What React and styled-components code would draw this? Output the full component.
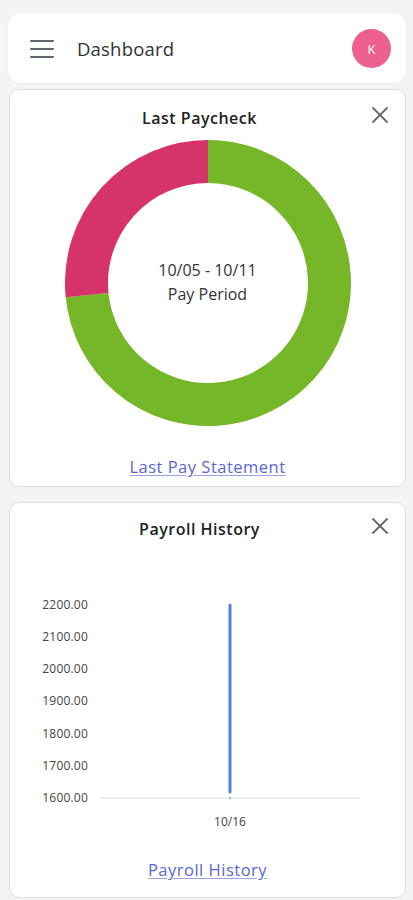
import React from "react";
import styled, { createGlobalStyle } from "styled-components";

const Global = createGlobalStyle`
  html, body { margin: 0; padding: 0; background: #f3f4f5; }
  body { font-family: "Open Sans", "Noto Sans", Arial, sans-serif; color: #2b2b2b; }
  * { box-sizing: border-box; }
`;

const Page = styled.div`
  display: flex;
  flex-direction: column;
  padding: 14px 7px 2px 8px;
  width: 413px;
`;

const TopBar = styled.header`
  display: flex;
  align-items: center;
  height: 69px;
  background: #fff;
  border-radius: 12px;
  padding: 0 15px 0 22px;
  box-shadow: 0 1px 2px rgba(0, 0, 0, 0.05);
`;

const MenuButton = styled.div`
  width: 24px;
  height: 18px;
  display: flex;
  flex-direction: column;
  justify-content: space-between;
  span {
    display: block;
    height: 2px;
    background: #5f6870;
    border-radius: 1px;
  }
`;

const Title = styled.h1`
  flex: 1;
  margin: 0 0 0 23px;
  font-size: 18.5px;
  font-weight: 400;
  color: #333;
  letter-spacing: 0.2px;
`;

const Avatar = styled.div`
  width: 39px;
  height: 39px;
  border-radius: 50%;
  background: #ec5f8e;
  color: #fff;
  font-size: 13px;
  display: flex;
  align-items: center;
  justify-content: center;
`;

const Card = styled.section`
  background: #fff;
  border: 1px solid #dcdde0;
  border-radius: 10px;
  margin-top: ${(p) => p.$gap}px;
  margin-left: 1px;
  height: ${(p) => p.$h}px;
  display: flex;
  flex-direction: column;
  align-items: center;
  padding-top: ${(p) => p.$pt}px;
`;

const CardHead = styled.div`
  width: 100%;
  display: grid;
  grid-template-columns: 1fr auto 1fr;
  align-items: center;
  padding-right: 16px;
`;

const CardTitle = styled.h2`
  grid-column: 2;
  margin: 0;
  font-size: 16px;
  line-height: 20px;
  font-weight: 600;
  color: #222;
  letter-spacing: 0.5px;
`;

const Close = styled.div`
  grid-column: 3;
  justify-self: end;
  width: 18px;
  height: 18px;
  margin-top: -6px;
  svg { display: block; }
`;

const DonutWrap = styled.div`
  position: relative;
  width: 286px;
  height: 286px;
  margin-top: 12px;
  svg { display: block; }
`;

const DonutCenter = styled.div`
  position: absolute;
  inset: 0;
  display: flex;
  flex-direction: column;
  align-items: center;
  justify-content: center;
  font-size: 16px;
  line-height: 24px;
  color: #333;
  padding-bottom: 2px;
`;

const LinkText = styled.a`
  margin-top: ${(p) => p.$mt}px;
  font-size: 16.5px;
  line-height: 20px;
  letter-spacing: 0.5px;
  color: #5866d9;
  text-decoration: underline;
  text-decoration-color: #9aa3e6;
  text-underline-offset: 2px;
  cursor: pointer;
`;

const Chart = styled.div`
  width: 100%;
  margin-top: 58px;
  display: grid;
  grid-template-columns: 58px 260px;
  column-gap: 12px;
  padding-left: 20px;
`;

const YAxis = styled.div`
  height: 209px;
  display: flex;
  flex-direction: column;
  justify-content: space-between;
  text-align: right;
  font-size: 12px;
  line-height: 16px;
  color: #444;
  letter-spacing: 0.2px;
`;

const Plot = styled.div`
  height: 209px;
  svg { display: block; }
`;

const XLabel = styled.div`
  grid-column: 2;
  text-align: center;
  margin-top: 8px;
  font-size: 12px;
  line-height: 16px;
  color: #444;
`;

function arcPath(cx, cy, r, a0, a1) {
  const rad = (a) => ((a - 90) * Math.PI) / 180;
  const x0 = cx + r * Math.cos(rad(a0));
  const y0 = cy + r * Math.sin(rad(a0));
  const x1 = cx + r * Math.cos(rad(a1));
  const y1 = cy + r * Math.sin(rad(a1));
  const large = a1 - a0 > 180 ? 1 : 0;
  return `M ${x0} ${y0} A ${r} ${r} 0 ${large} 1 ${x1} ${y1}`;
}

const CloseIcon = () => (
  <svg width="18" height="18" viewBox="0 0 18 18">
    <path d="M2 2 L16 16 M16 2 L2 16" stroke="#6a6e73" strokeWidth="2" strokeLinecap="round" />
  </svg>
);

export default function App() {
  const pinkDeg = 95.7;
  const labels = ["2200.00", "2100.00", "2000.00", "1900.00", "1800.00", "1700.00", "1600.00"];
  return (
    <>
      <Global />
      <Page>
        <TopBar>
          <MenuButton>
            <span />
            <span />
            <span />
          </MenuButton>
          <Title>Dashboard</Title>
          <Avatar>K</Avatar>
        </TopBar>

        <Card $gap={6} $h={398} $pt={18}>
          <CardHead>
            <CardTitle>Last Paycheck</CardTitle>
            <Close><CloseIcon /></Close>
          </CardHead>
          <DonutWrap>
            <svg width="286" height="286" viewBox="0 0 286 286">
              <path d={arcPath(143, 143, 121.5, 0, 360 - pinkDeg)} fill="none" stroke="#76b72a" strokeWidth="43" />
              <path d={arcPath(143, 143, 121.5, 360 - pinkDeg, 360)} fill="none" stroke="#d5336a" strokeWidth="43" />
            </svg>
            <DonutCenter>
              <div>10/05 - 10/11</div>
              <div>Pay Period</div>
            </DonutCenter>
          </DonutWrap>
          <LinkText $mt={31}>Last Pay Statement</LinkText>
        </Card>

        <Card $gap={15} $h={396} $pt={16}>
          <CardHead>
            <CardTitle>Payroll History</CardTitle>
            <Close><CloseIcon /></Close>
          </CardHead>
          <Chart>
            <YAxis>
              {labels.map((l) => (
                <div key={l}>{l}</div>
              ))}
            </YAxis>
            <Plot>
              <svg width="260" height="209" viewBox="0 0 260 209">
                <line x1="0" y1="201" x2="260" y2="201" stroke="#e4e8ea" strokeWidth="1.5" />
                <line x1="130" y1="8" x2="130" y2="195" stroke="#5b7be2" strokeWidth="3" strokeLinecap="round" />
                <circle cx="130" cy="201" r="1.5" fill="#9fd3d0" />
              </svg>
            </Plot>
            <XLabel>10/16</XLabel>
          </Chart>
          <LinkText $mt={30}>Payroll History</LinkText>
        </Card>
      </Page>
    </>
  );
}
